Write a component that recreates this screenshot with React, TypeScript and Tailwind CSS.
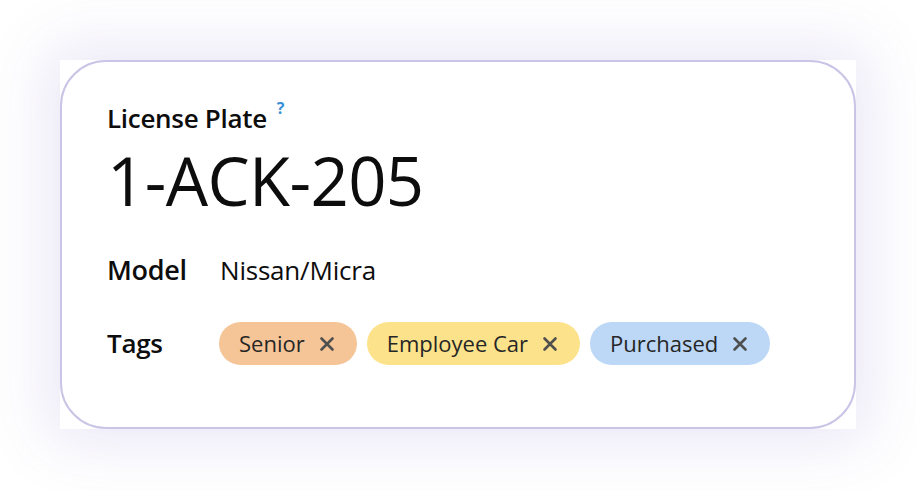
import React from 'react';

interface Tag {
  label: string;
  bg: string;
}

const tags: Tag[] = [
  { label: 'Senior', bg: 'bg-[#f5c597]' },
  { label: 'Employee Car', bg: 'bg-[#fce38b]' },
  { label: 'Purchased', bg: 'bg-[#bcd8f6]' },
];

const CloseIcon: React.FC = () => (
  <svg width="16" height="16" viewBox="0 0 16 16" className="shrink-0">
    <path d="M2.5 2.5 L13.5 13.5 M13.5 2.5 L2.5 13.5" stroke="#4f4f4f" strokeWidth="2.6" strokeLinecap="round" />
  </svg>
);

const App: React.FC = () => {
  return (
    <div className="w-[916px] h-[490px] bg-white p-[60px] font-['Open_Sans',sans-serif] text-[#0d0d0d]">
      <div className="w-[796px] h-[369px] bg-white shadow-[0_0_60px_10px_rgba(110,90,190,0.16)]">
        <div className="h-full rounded-[46px] border-2 border-[#c9c5e6] pl-[45px] pt-[39px]">
          <div className="flex items-start h-[34px]">
            <span className="text-[26px] font-semibold leading-[34px] tracking-[-0.3px]">License Plate</span>
            <span className="ml-[10px] -mt-[1px] text-[16px] font-bold text-[#3b8fd6] leading-none">?</span>
          </div>
          <div className="text-[67px] leading-[76px] mt-[7px] tracking-[-0.6px]">1-ACK-205</div>

          <div className="flex items-center mt-[30px] h-[44px]">
            <span className="w-[113px] text-[27px] font-semibold tracking-[-0.3px]">Model</span>
            <span className="text-[26px] tracking-[-0.2px]">Nissan/Micra</span>
          </div>

          <div className="flex items-center mt-[30px]">
            <span className="w-[112px] text-[26px] font-semibold tracking-[-0.3px]">Tags</span>
            <div className="flex gap-[10px]">
              {tags.map(t => (
                <div
                  key={t.label}
                  className={`${t.bg} h-[43px] rounded-full pl-[20px] pr-[22px] flex items-center gap-[14px]`}
                >
                  <span className="text-[22px] text-[#262626]">{t.label}</span>
                  <CloseIcon />
                </div>
              ))}
            </div>
          </div>
        </div>
      </div>
    </div>
  );
};

export default App;
